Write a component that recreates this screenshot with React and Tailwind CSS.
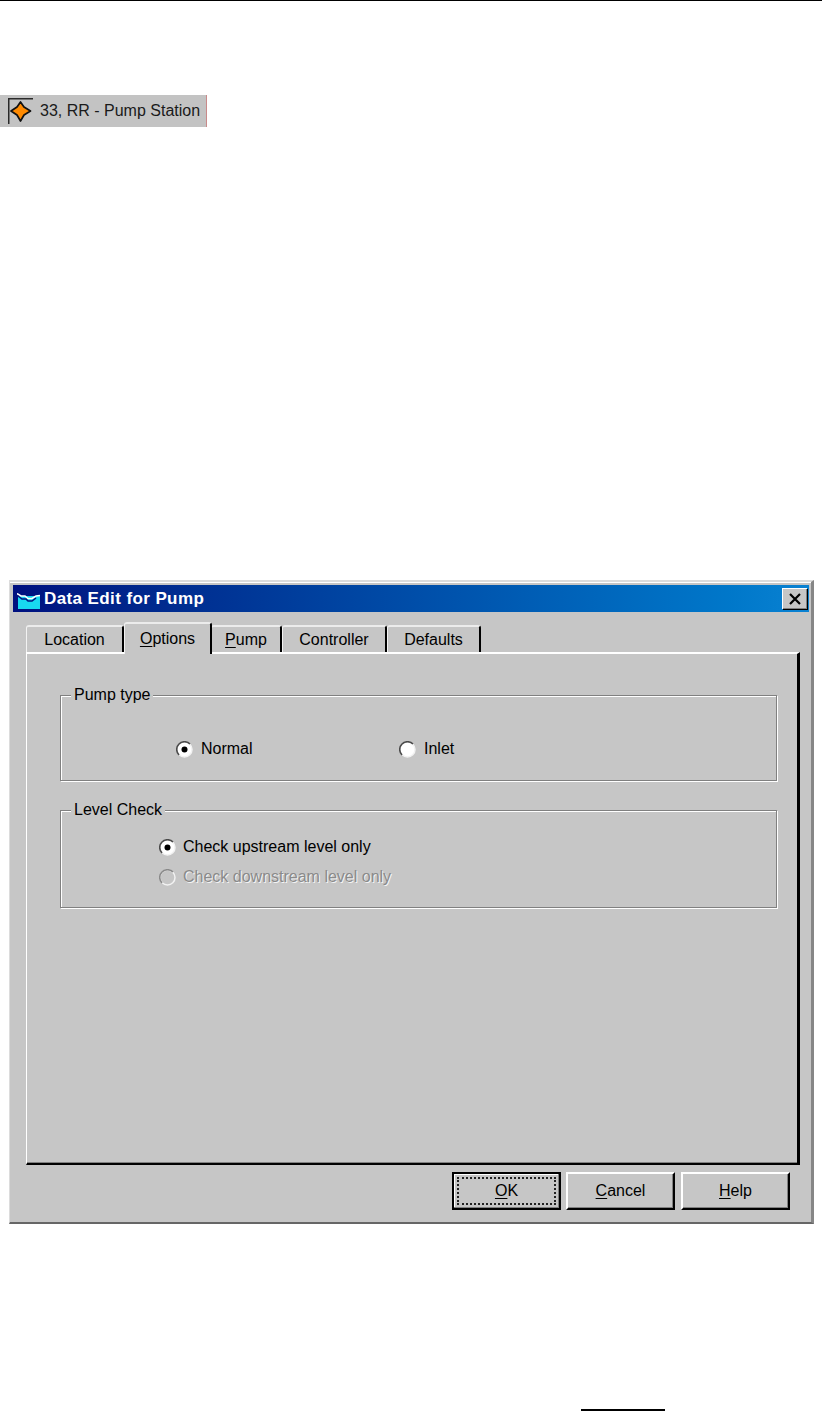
import React from 'react';

const font = "font-['Liberation_Sans',Arial,sans-serif]";

const tabs = [
  { label: 'Location', key: null, w: 'w-[98px]', active: false },
  { label: 'Options', key: 'O', w: 'w-[88px]', active: true },
  { label: 'Pump', key: 'P', w: 'w-[71px]', active: false },
  { label: 'Controller', key: null, w: 'w-[105px]', active: false },
  { label: 'Defaults', key: null, w: 'w-[94px]', active: false },
];

const Mnemonic = ({ text, letter }) => {
  if (!letter) return <span>{text}</span>;
  return (
    <span>
      <u className="underline-offset-2">{letter}</u>
      {text.slice(1)}
    </span>
  );
};

const Radio = ({ checked, disabled }) => (
  <svg width="17" height="17" viewBox="0 0 17 17" className="shrink-0">
    <circle cx="8.5" cy="8.5" r="7.5" fill={disabled ? '#c6c6c6' : '#ffffff'} stroke="#f2f2f2" strokeWidth="1.5" />
    <path d="M3 14 A7.7 7.7 0 0 1 14 3" fill="none" stroke={disabled ? '#8a8a8a' : '#4a4a4a'} strokeWidth="1.6" />
    {checked && <circle cx="8.5" cy="8.5" r="3" fill="#000000" />}
  </svg>
);

const RadioRow = ({ label, checked, disabled, className }) => (
  <div className={`flex items-center ${className || ''}`}>
    <Radio checked={checked} disabled={disabled} />
    <span className={disabled ? 'text-[#8a8a8a] [text-shadow:1px_1px_0_#f4f4f4]' : 'text-black'}>{label}</span>
  </div>
);

const GroupBox = ({ title, className, children }) => (
  <div className={`relative ml-[33px] w-[717px] border border-[#808080] shadow-[inset_1px_1px_0_#fff,1px_1px_0_#fff] ${className}`}>
    <span className="absolute left-[10px] top-[-10px] bg-[#c6c6c6] px-[3px] leading-[18px] text-black">{title}</span>
    {children}
  </div>
);

const Button = ({ letter, text, isDefault, className }) => (
  <div
    className={`flex h-[38px] w-[109px] items-center justify-center bg-[#c6c6c6] text-black ${className || ''} ${
      isDefault
        ? 'border-2 border-black p-[3px] shadow-[inset_-1px_-1px_0_#808080,inset_1px_1px_0_#fff]'
        : 'border-t-2 border-l-2 border-r-2 border-b-2 border-t-white border-l-white border-r-black border-b-black shadow-[inset_-1px_-1px_0_#808080]'
    }`}
  >
    {isDefault ? (
      <div className="flex h-full w-full items-center justify-center border-2 border-dotted border-[#222]">
        <Mnemonic text={text} letter={letter} />
      </div>
    ) : (
      <Mnemonic text={text} letter={letter} />
    )}
  </div>
);

export default function App() {
  return (
    <div className={`h-[1411px] w-[822px] overflow-hidden bg-white text-[16px] ${font}`}>
      <div className="h-px bg-black" />

      <div className="mt-[94px] flex h-[32px] w-[207px] items-center border-r border-r-[#c98a8a] bg-[#c3c3c3] pl-[8px] text-[16px] text-[#1a1a1a]">
        <svg width="25" height="26" viewBox="0 0 25 26" className="shrink-0">
          <path d="M0.75 26 V0.75 H25" fill="none" stroke="#2a2a2a" strokeWidth="1.5" />
          <path d="M12.5 4 L16 9 L22.5 13 L16 17 L12.5 23 L9 17 L3 13 L9 9 Z" fill="#ff8a00" stroke="#111" strokeWidth="1.7" strokeLinejoin="round" />
        </svg>
        <span className="ml-[7px] whitespace-nowrap">33, RR - Pump Station</span>
      </div>

      <div className="ml-[9px] mt-[453px] flex h-[644px] w-[805px] flex-col border-t-2 border-l border-r-[3px] border-b-2 border-t-[#dcdcdc] border-l-[#dcdcdc] border-r-[#868686] border-b-[#666] bg-[#c6c6c6] pt-[3px] pl-[3px] shadow-[inset_0_1px_0_#fff]">
        <div className="flex h-[27px] w-[796px] items-center bg-gradient-to-r from-[#00107f] to-[#0a82d2] pl-[4px] pr-[2px]">
          <svg width="23" height="16" viewBox="0 0 23 16" className="mt-[4px] shrink-0">
            <rect x="1" y="3" width="22" height="13" fill="#18d8f0" />
            <path d="M0 0.5 L4 3 L8 3 L11 5.5 L15 5.5 L19 3 L23 2.5" fill="none" stroke="#ffffff" strokeWidth="1.5" />
            <path d="M1 3 L5 6 L9 6 L11 8 L15 8 L19 5" fill="none" stroke="#00107f" strokeWidth="1.5" />
          </svg>
          <span className="ml-[4px] flex-1 text-[17px] font-bold tracking-[0.4px] text-white">Data Edit for Pump</span>
          <div className="flex h-[21px] w-[25px] items-center justify-center border-t border-l border-t-white border-l-white bg-[#c6c6c6] shadow-[inset_-1px_-1px_0_#808080,1px_1px_0_#000]">
            <svg width="14" height="12" viewBox="0 0 14 12">
              <path d="M2 1 L12 11 M12 1 L2 11" stroke="#000" strokeWidth="2.2" />
            </svg>
          </div>
        </div>

        <div className="ml-[13px] mt-[10px] flex h-[30px] items-end">
          {tabs.map((t) => (
            <div
              key={t.label}
              className={`relative flex items-center justify-center rounded-t-[3px] border-t-2 border-l border-r-2 border-t-[#ececec] border-l-[#f2f2f2] border-r-black bg-[#c6c6c6] text-black ${t.w} ${
                t.active ? 'z-10 -mb-[2px] h-[32px] -mr-[1px]' : 'h-[27px]'
              }`}
            >
              <Mnemonic text={t.label} letter={t.key} />
            </div>
          ))}
        </div>

        <div className="ml-[13px] flex h-[513px] w-[774px] flex-col border-t-2 border-l border-r-[3px] border-b-2 border-t-white border-l-white border-r-black border-b-black shadow-[inset_0_-1px_0_#808080]">
          <GroupBox title="Pump type" className="mt-[41px] h-[86px]">
            <div className="flex pl-[115px] pt-[41px]">
              <RadioRow label="Normal" checked className="w-[223px] gap-[8px]" />
              <RadioRow label="Inlet" className="gap-[8px]" />
            </div>
          </GroupBox>
          <GroupBox title="Level Check" className="mt-[29px] h-[98px]">
            <div className="flex flex-col gap-[6px] pl-[98px] pt-[24px]">
              <RadioRow label="Check upstream level only" checked className="gap-[7px]" />
              <RadioRow label="Check downstream level only" disabled className="gap-[7px]" />
            </div>
          </GroupBox>
        </div>

        <div className="ml-[13px] mt-[7px] flex w-[764px] justify-end gap-[5px]">
          <Button letter="O" text="OK" isDefault />
          <Button letter="C" text="Cancel" />
          <Button letter="H" text="Help" className="ml-px" />
        </div>
      </div>

      <div className="ml-[581px] mt-[185px] h-[2px] w-[84px] bg-black" />
    </div>
  );
}
